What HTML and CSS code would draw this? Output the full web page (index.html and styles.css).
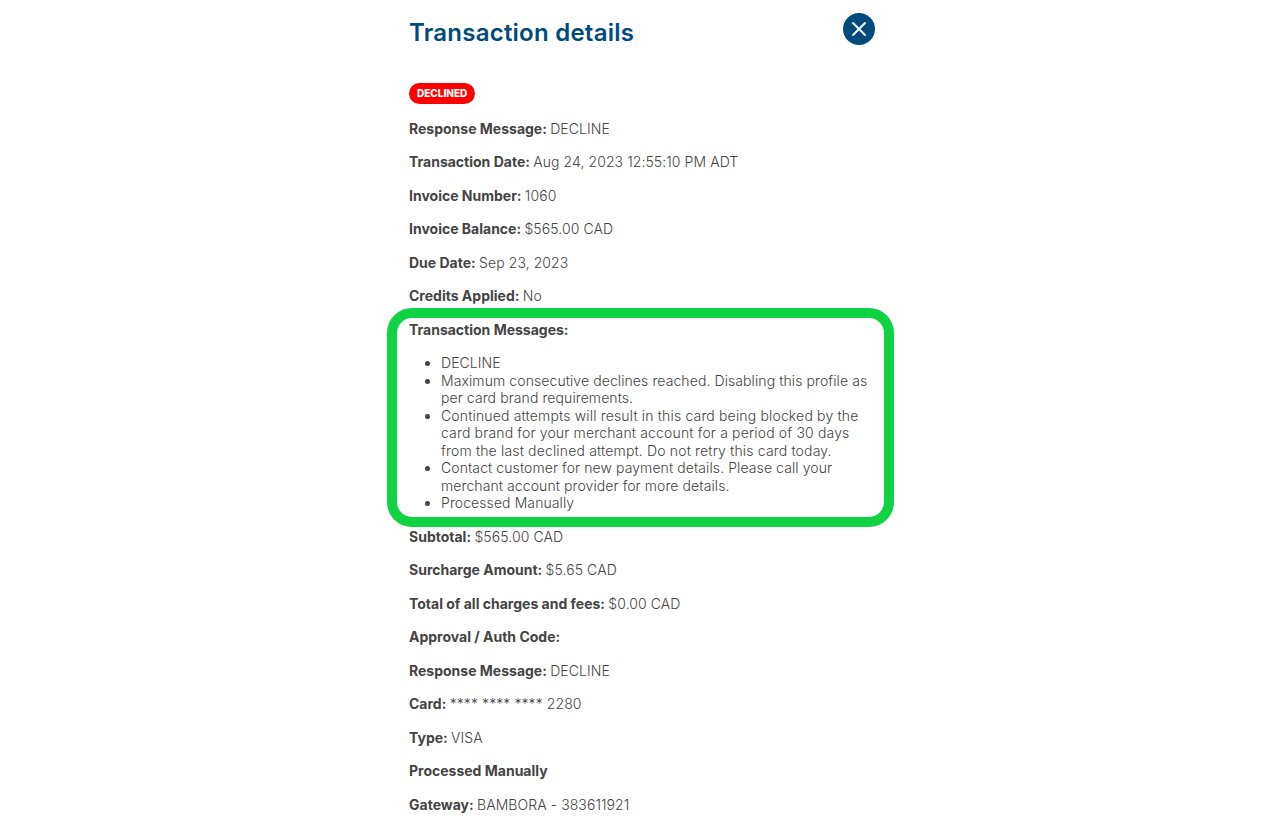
FILE: index.html
```html
<!DOCTYPE html>
<html lang="en">
<head>
    <meta charset="UTF-8">
    <meta name="viewport" content="width=device-width, initial-scale=1.0">
    <title>Transaction details</title>
    <link rel="stylesheet" href="styles.css">
</head>
<body>
    <div class="modal">
        <div class="modal-header">
            <h2 class="modal-title">Transaction details</h2>
            <button class="close-button" aria-label="Close">
                <svg width="32" height="32" viewBox="0 0 32 32">
                    <path d="M10 10L22 22M22 10L10 22" fill="none" stroke="#fff" stroke-width="1.9" stroke-linecap="round"/>
                </svg>
            </button>
        </div>

        <div class="details">
            <span class="badge">DECLINED</span>
            <p><b>Response Message:</b> DECLINE</p>
            <p><b>Transaction Date:</b> Aug 24, 2023 12:55:10 PM ADT</p>
            <p><b>Invoice Number:</b> 1060</p>
            <p><b>Invoice Balance:</b> $565.00 CAD</p>
            <p><b>Due Date:</b> Sep 23, 2023</p>
            <p><b>Credits Applied:</b> No</p>

            <div class="messages">
                <p><b>Transaction Messages:</b></p>
                <ul>
                    <li>DECLINE</li>
                    <li>Maximum consecutive declines reached. Disabling this profile as per card brand requirements.</li>
                    <li class="long">Continued attempts will result in this card being blocked by the card brand for your merchant account for a period of 30 days from the last declined attempt. Do not retry this card today.</li>
                    <li>Contact customer for new payment details. Please call your merchant account provider for more details.</li>
                    <li>Processed Manually</li>
                </ul>
                <div class="highlight"></div>
            </div>

            <p><b>Subtotal:</b> $565.00 CAD</p>
            <p><b>Surcharge Amount:</b> $5.65 CAD</p>
            <p><b>Total of all charges and fees:</b> $0.00 CAD</p>
            <p><b>Approval / Auth Code:</b></p>
            <p><b>Response Message:</b> DECLINE</p>
            <p><b>Card:</b> **** **** **** 2280</p>
            <p><b>Type:</b> VISA</p>
            <p><b>Processed Manually</b></p>
            <p><b>Gateway:</b> BAMBORA - 383611921</p>
        </div>
    </div>
</body>
</html>
```

FILE: styles.css
```css
body {
    margin: 0;
    height: 838px;
    overflow: hidden;
    background: #fff;
    color: #444;
    font-family: Inter, sans-serif;
    font-size: 14px;
    font-weight: 300;
    letter-spacing: 0.08px;
    line-height: 1.25;
}

.modal {
    box-sizing: border-box;
    width: 466px;
    margin: 0 auto;
    padding-top: 13px;
}

.modal-header {
    display: flex;
    justify-content: space-between;
    align-items: flex-start;
    height: 70px;
}

.modal-title {
    margin: 5px 0 0;
    color: #004a7c;
    font-size: 24px;
    font-weight: 600;
    letter-spacing: 0.24px;
    line-height: 30px;
}

.close-button {
    width: 32px;
    height: 32px;
    padding: 0;
    border: none;
    border-radius: 50%;
    background: #004a7c;
    cursor: pointer;
}

.close-button svg {
    display: block;
}

.details {
    display: flex;
    flex-direction: column;
    gap: 16px;
}

.details p {
    margin: 0;
}

.details b {
    margin-right: -0.7px;
    font-weight: 700;
    letter-spacing: 0;
}

.badge {
    align-self: flex-start;
    margin-bottom: -0.2px;
    padding: 0 8px;
    border-radius: 11px;
    background: #f00;
    color: #fff;
    font-size: 10px;
    font-weight: 800;
    letter-spacing: 0;
    line-height: 21px;
}

.messages {
    position: relative;
}

.messages ul {
    margin: 16px 0 0;
    padding-left: 32px;
}

.messages li {
    letter-spacing: 0.09px;
}

.messages .long {
    letter-spacing: 0.16px;
}

.highlight {
    position: absolute;
    top: -13px;
    right: -19px;
    bottom: -15px;
    left: -22px;
    border: 10px solid #10d344;
    border-radius: 25px;
    pointer-events: none;
}
```
